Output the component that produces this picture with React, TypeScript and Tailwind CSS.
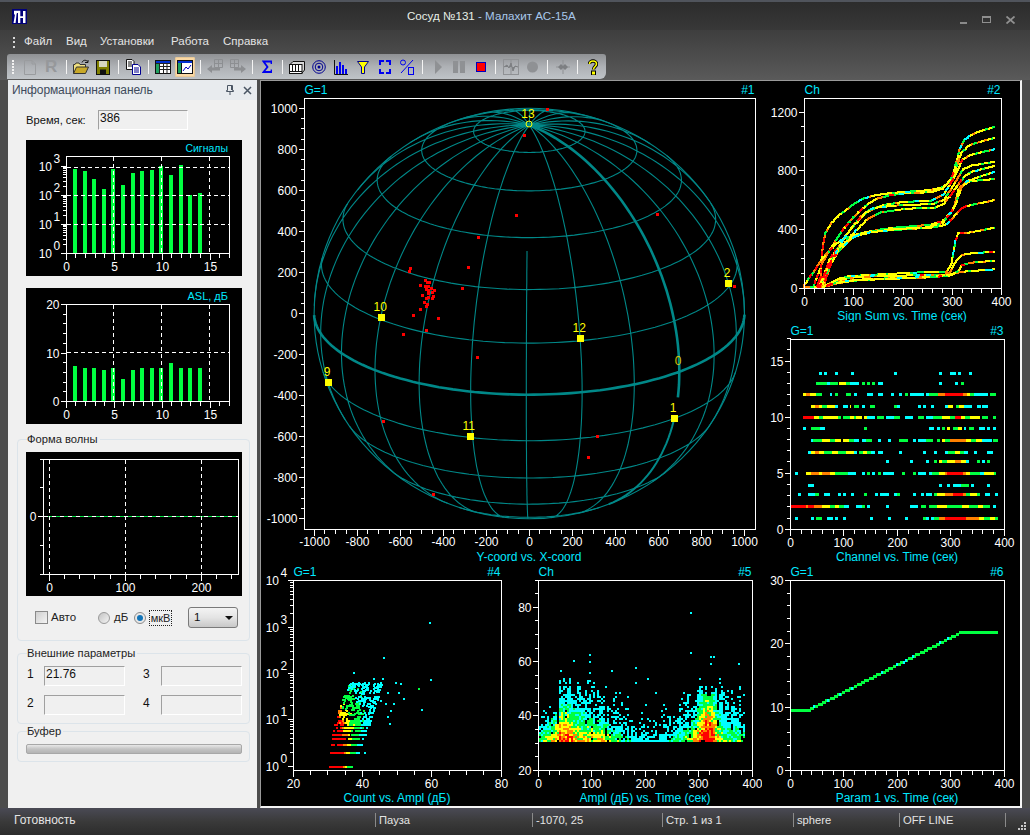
import React from "react";

const C: Record<string, string> = { c: "#00ffff", g: "#00ff40", y: "#ffff00", o: "#ff8000", r: "#ff0000" };

type Tick = { p: number; len: number; text?: string; sup?: string };
type Pt = [number, number, string];

function rng(seed: number) {
  let a = seed;
  return () => {
    a = (a + 0x6d2b79f5) | 0;
    let t = Math.imul(a ^ (a >>> 15), 1 | a);
    t = (t + Math.imul(t ^ (t >>> 7), 61 | t)) ^ t;
    return ((t ^ (t >>> 14)) >>> 0) / 4294967296;
  };
}

// linear axis ticks, position rounded onto the pixel
function lin(v0: number, p0: number, v1: number, p1: number, lo: number, hi: number, major: number, minor: number) {
  const out: Tick[] = [];
  const n = Math.round((hi - lo) / minor);
  for (let i = 0; i <= n; i++) {
    const v = lo + i * minor;
    const p = Math.floor(p0 + ((v - v0) * (p1 - p0)) / (v1 - v0)) + 0.5;
    const isMajor = Math.abs(v % major) < 1e-6;
    out.push({ p, len: isMajor ? 6 : 4, text: isMajor ? String(v) : undefined });
  }
  return out;
}

function logTicks(bottom: number, decade: number, count: number) {
  const out: Tick[] = [];
  for (let d = 0; d <= count; d++) {
    const y = bottom - d * decade;
    out.push({ p: Math.floor(y) + 0.5, len: 6, text: "10", sup: String(d) });
    if (d === count) break;
    for (let m = 2; m < 10; m++) out.push({ p: Math.floor(y - Math.log10(m) * decade) + 0.5, len: 4 });
  }
  return out;
}

function Dots({ pts, w = 2, h = 2 }: { pts: Pt[]; w?: number; h?: number }) {
  const byColor: Record<string, string[]> = {};
  pts.forEach(([x, y, c]) => {
    (byColor[c] ||= []).push(`M${Math.round(x)} ${Math.round(y)}h${w}v${h}h${-w}z`);
  });
  return (
    <g shapeRendering="crispEdges">
      {Object.keys(byColor).map((c) => (
        <path key={c} d={byColor[c].join("")} fill={C[c]} />
      ))}
    </g>
  );
}

type PlotProps = {
  x: number;
  y: number;
  w: number;
  h: number;
  rect: [number, number, number, number];
  xt: Tick[];
  yt: Tick[];
  xBase: number;
  title?: string;
  num?: string;
  titleBase?: number;
  label?: string;
  labelX?: number;
  labelBase?: number;
  children?: React.ReactNode;
};

function Plot({ x, y, w, h, rect, xt, yt, xBase, title, num, titleBase = 0, label, labelX, labelBase, children }: PlotProps) {
  const [l, t, r, b] = rect;
  return (
    <svg width={w} height={h} viewBox={`${x} ${y} ${w} ${h}`} className="block shrink-0 bg-black" fontSize={12}>
      {children}
      <g stroke="#fff" shapeRendering="crispEdges" fill="none">
        <rect x={l} y={t} width={r - l} height={b - t} />
        {xt.map((k, i) => (
          <line key={i} x1={k.p} x2={k.p} y1={b} y2={b + k.len} />
        ))}
        {yt.map((k, i) => (
          <line key={i} y1={k.p} y2={k.p} x1={l} x2={l - k.len} />
        ))}
      </g>
      <g fill="#fff">
        {xt.map((k, i) =>
          k.text ? (
            <text key={i} x={k.p} y={xBase} textAnchor="middle">
              {k.text}
            </text>
          ) : null
        )}
        {yt.map((k, i) =>
          k.text ? (
            k.sup ? (
              <g key={i}>
                <text x={l - 14.5} y={k.p + 4} textAnchor="end">
                  {k.text}
                </text>
                <text x={l - 13} y={k.p - 4}>
                  {k.sup}
                </text>
              </g>
            ) : (
              <text key={i} x={l - 7} y={k.p + 4} textAnchor="end">
                {k.text}
              </text>
            )
          ) : null
        )}
      </g>
      <g fill="#00e8ff">
        {title && (
          <text x={l} y={titleBase}>
            {title}
          </text>
        )}
        {num && (
          <text x={r - 1} y={titleBase} textAnchor="end">
            {num}
          </text>
        )}
        {label && (
          <text x={labelX} y={labelBase} textAnchor="middle">
            {label}
          </text>
        )}
      </g>
    </svg>
  );
}

// --- sphere ------------------------------------------------------------
const SX = 529.3;
const SY = 313.5;
const RX = 215.2;
const RY = 205.2;
const TILT = (23.3 * Math.PI) / 180;
const OFF = -0.8;

function proj(lat: number, lon: number) {
  const la = (lat * Math.PI) / 180;
  const lo = ((lon + OFF) * Math.PI) / 180;
  const xx = Math.cos(la) * Math.sin(lo);
  const zz = Math.sin(la);
  const yy = Math.cos(la) * Math.cos(lo);
  return {
    x: SX + xx * RX,
    y: SY - (zz * Math.cos(TILT) - yy * Math.sin(TILT)) * RY,
    sy: zz * Math.cos(TILT) - yy * Math.sin(TILT),
    d: yy * Math.cos(TILT) + zz * Math.sin(TILT),
  };
}

function trace(n: number, at: (i: number) => ReturnType<typeof proj>, keep: (p: ReturnType<typeof proj>) => boolean) {
  let d = "";
  let pen = false;
  for (let i = 0; i <= n; i++) {
    const p = at(i);
    if (keep(p)) {
      d += `${pen ? "L" : "M"}${p.x.toFixed(1)} ${p.y.toFixed(1)}`;
      pen = true;
    } else pen = false;
  }
  return d;
}

function sphereLines() {
  let thin = "";
  for (const lat of [75, 60, 45, 30, 15, -15, -30, -45, -60, -75]) {
    const all = lat >= 60;
    thin += trace(180, (i) => proj(lat, i * 2), (p) => all || p.d >= 0);
  }
  for (let lon = 0; lon < 360; lon += 15) {
    if (lon === 45) continue;
    if (lon === 0) thin += trace(90, (i) => proj(41 - i * 1.5, 0), (p) => p.d >= 0);
    else thin += trace(90, (i) => proj(90 - i * 2, lon), (p) => p.d >= 0);
  }
  const eq = trace(180, (i) => proj(0, i * 2), (p) => p.d >= 0);
  const mer1 = trace(90, (i) => proj(90 - i * 2, 45), (p) => p.d >= 0 && p.sy > -0.42);
  const mer2 = trace(90, (i) => proj(90 - i * 2, 45), (p) => p.d >= 0 && p.sy < -0.5);
  return { thin, thick: eq + mer1, mid: mer2 };
}

const Z4 = (a: number, b: number): [number, number] => [260 + a / 3, 80 + b / 3];
const RED = [
  [862, 88], [793, 166], [769, 406], [1192, 403], [655, 472], [625, 562], [450, 565], [447, 574], [1423, 619],
  [607, 625], [481, 616], [487, 646], [481, 688], [460, 706], [535, 715], [499, 751], [430, 763], [652, 832],
  [370, 1024], [1012, 1069], [985, 1132], [520, 1243], [496, 601], [500, 607], [508, 607], [495, 619], [503, 619],
  [513, 625], [498, 628], [505, 631], [522, 631], [516, 637], [505, 640], [519, 649], [505, 650], [515, 655],
  [497, 655], [493, 667], [500, 672], [499, 678],
];
const MARKS: [number, number, string, number, number][] = [
  [728.3, 283.3, "2", 727, 276.7],
  [381.3, 317.3, "10", 380.3, 311],
  [580.3, 338.3, "12", 579.3, 331.7],
  [328.3, 382.3, "9", 327, 376],
  [470.3, 436.3, "11", 468.7, 430],
  [674.3, 418.3, "1", 673, 412],
];

function SpherePlot() {
  const s = sphereLines();
  return (
    <Plot
      x={261}
      y={81}
      w={501}
      h={484}
      rect={[304.5, 98.5, 755.5, 529.5]}
      xt={lin(-1000, 314, 1000, 744.3, -1000, 1000, 200, 50)}
      yt={lin(1000, 108.3, -1000, 518.7, -1000, 1000, 200, 50)}
      xBase={546}
      title="G=1"
      num="#1"
      titleBase={93.5}
      label="Y-coord vs. X-coord"
      labelX={529}
      labelBase={560.5}
    >
      <g fill="none" stroke="#008888">
        <g strokeWidth={1.1}>
          <ellipse cx={SX} cy={SY} rx={RX} ry={RY} />
          <path d={s.thin} />
        </g>
        <path d={s.thick} strokeWidth={2.6} />
        <path d={s.mid} strokeWidth={2} />
      </g>
      <g fill="#ff0000" shapeRendering="crispEdges">
        {RED.map(([a, b], i) => {
          const [px, py] = Z4(a, b);
          return <rect key={i} x={Math.round(px) - 1} y={Math.round(py) - 1} width={3} height={3} />;
        })}
      </g>
      <g fill="#ffff00" textAnchor="middle">
        {MARKS.map(([mx, my, t, lx, ly]) => (
          <g key={t}>
            <rect x={Math.round(mx) - 3} y={Math.round(my) - 3} width={7} height={7} shapeRendering="crispEdges" />
            <text x={lx} y={ly}>
              {t}
            </text>
          </g>
        ))}
        <text x={528} y={117.7}>
          13
        </text>
        <text x={678} y={364.7} fill="#d8c800">
          0
        </text>
        <circle cx={529} cy={124} r={3} fill="none" stroke="#ffff00" />
      </g>
    </Plot>
  );
}

// --- #2 sign sum --------------------------------------------------------
const CURVES: number[][] = [
  [133, 860, 180, 860, 190, 710, 220, 660, 270, 620, 320, 590, 400, 578, 540, 568, 575, 540, 605, 425, 640, 400, 705, 380],
  [160, 860, 190, 780, 240, 700, 290, 640, 340, 600, 400, 582, 540, 575, 580, 530, 610, 440, 705, 413],
  [175, 860, 210, 790, 260, 700, 320, 630, 400, 608, 540, 600, 590, 520, 610, 470, 705, 447],
  [175, 860, 215, 780, 260, 700, 330, 625, 420, 615, 545, 612, 590, 540, 615, 500, 705, 485],
  [185, 860, 220, 770, 270, 710, 340, 640, 450, 625, 545, 622, 590, 560, 620, 520, 705, 497],
  [133, 855, 175, 795, 190, 770, 240, 720, 300, 700, 380, 685, 540, 672, 580, 630, 600, 550, 705, 515],
  [180, 860, 215, 760, 280, 710, 360, 690, 540, 680, 585, 620, 610, 545, 705, 537],
  [190, 860, 220, 770, 290, 700, 400, 690, 555, 680, 590, 640, 610, 620, 705, 600],
  [190, 860, 250, 830, 320, 825, 520, 815, 570, 815, 590, 700, 615, 700, 705, 683],
  [190, 860, 240, 838, 300, 830, 500, 825, 565, 825, 590, 780, 610, 762, 705, 755],
  [190, 860, 240, 845, 300, 838, 540, 830, 590, 820, 610, 790, 705, 782],
  [185, 862, 240, 848, 300, 840, 560, 830, 600, 815, 705, 808],
];

// one pass of corner cutting so the curves do not bend hard at the control points
function smooth(p: number[]) {
  const q = [p[0], p[1]];
  for (let i = 0; i + 3 < p.length; i += 2) {
    q.push(p[i] * 0.8 + p[i + 2] * 0.2, p[i + 1] * 0.8 + p[i + 3] * 0.2);
    q.push(p[i] * 0.2 + p[i + 2] * 0.8, p[i + 1] * 0.2 + p[i + 3] * 0.8);
  }
  q.push(p[p.length - 2], p[p.length - 1]);
  return q;
}

function sumPoints() {
  const r = rng(7);
  const pts: Pt[] = [];
  CURVES.forEach((raw) => {
    const c = smooth(raw);
    let step = 0;
    let col = "y";
    for (let i = 0; i + 3 < c.length; i += 2) {
      const x0 = 760 + c[i] / 3;
      const y0 = c[i + 1] / 3;
      const x1 = 760 + c[i + 2] / 3;
      const y1 = c[i + 3] / 3;
      const n = Math.max(1, Math.ceil(Math.hypot(x1 - x0, y1 - y0) / 1.2));
      for (let k = 0; k < n; k++) {
        const px = x0 + ((x1 - x0) * k) / n;
        const py = y0 + ((y1 - y0) * k) / n;
        if (step++ % 3 === 0) {
          const v = r();
          const hot = (px < 835 && py > 225) || (px > 950 && px < 965 && py > 160 && py < 240);
          if (hot) col = v < 0.35 ? "o" : v < 0.6 ? "r" : v < 0.9 ? "y" : "g";
          else col = v < 0.55 ? "y" : v < 0.78 ? "g" : v < 0.92 ? "o" : v < 0.98 ? "c" : "r";
        }
        pts.push([px - 1, py - 1, col]);
      }
    }
  });
  return pts;
}

// --- #3 channel ---------------------------------------------------------
const ROWS: [number, string][] = [
  [160, "177-186c 192-201c 225-234c 273-282c 402-411c 537-546c 570-588c 594-603c 627-636c"],
  [190, "168-200g 201-210c 210-235g 238-258y 258-270g 270-297c 306-315g 321-330g 336-345g 354-369c 537-546c 585-594c 603-612g"],
  [223, "129-138y 138-150o 150-168y 168-186g 210-216c 225-234g 258-273g 282-291c 321-339c 354-369c 393-402c 417-426c 435-444g 450-465c 465-492c 498-507c 507-534g 534-555o 555-609r 609-621o 621-630y 630-642g 642-684c 690-708g"],
  [258, "153-165y 165-177o 177-186y 186-201g 201-225y 225-234c 249-264c 270-273y 282-297g 306-315c 330-345g 402-411g 411-420c 474-483c 489-498c 513-522c 555-564c 564-579y 588-597g 597-612y 612-636c 651-663c 666-684c"],
  [290, "129-162r 162-177y 177-189g 189-234y 234-243g 249-270g 270-282y 282-288g 288-306y 312-321y 321-345c 351-372g 378-402c 402-420g 435-459c 474-492g 498-519c 519-546g 546-570y 570-585g 585-603r 603-615y 615-630g 630-660y 666-684g 699-708g"],
  [325, "129-138c 153-180g 180-195c 312-321g 507-522c 531-540c 546-555g 561-570y 579-594g 594-606y 612-618c 627-642g 657-675c 681-690c 699-708c"],
  [360, "153-159c 159-186g 186-210y 210-225g 225-243y 249-267y 267-282g 282-297c 306-318c 318-336g 354-363c 384-393c 417-444g 459-468c 474-498c 498-519g 531-540g 546-555y 555-570g 570-618o 618-633y 633-648g 648-666y 666-696c 699-714g"],
  [397, "144-153c 153-165y 165-177o 177-192y 192-216g 216-234y 234-258g 258-282y 282-291c 297-309g 309-321y 321-333g 333-345c 354-369c 417-426c 489-498c 522-531c 555-564c 564-585g 585-600y 600-612g 612-624c 642-651c 681-699c"],
  [424, "378-387c 450-459c 498-507c 522-531g 537-546y 546-561g 561-585y 585-603o 603-618y 618-627c 651-660g 666-675c 681-690g"],
  [460, "105-114c 138-153y 153-177o 177-186y 186-210o 210-225y 225-264g 264-288c 306-315c 321-330g 336-345c 354-363g 369-402c 426-435g 459-468g 474-498c 507-516c 516-537g 537-555y 555-561o 561-609r 609-618o 618-630y 630-660g 660-672c 672-702y 702-708g"],
  [496, "144-162c 537-546c 561-570c 579-603c 603-627g 633-642c 681-690c"],
  [523, "114-123c 144-165c 165-177g 192-210c 234-243c 249-258c 273-282c 312-321g 345-354c 360-387c 402-411c 411-420g 459-468c 483-492c 498-516c 522-531g 531-555y 555-579o 579-609r 609-618o 618-630g 630-651y 651-660g 675-690c 705-714c"],
  [559, "91-138r 138-144o 144-162r 162-186o 186-210y 210-225g 225-237y 237-252g 252-267c 288-306c 306-315g 321-330c 378-387c 450-474c 483-498g 507-531g 531-561y 561-606g 606-627y 627-654g 654-669y 669-690g 699-708c"],
  [595, "105-114c 153-162c 168-186g 201-219c 225-234c 249-258c 330-339c 384-393c 435-444c 489-498g 498-507c 513-522c 522-537g 537-555o 555-618r 618-657o 657-672y 672-690g 690-705y 705-714g"],
];

function ChannelRows() {
  return (
    <g shapeRendering="crispEdges">
      {ROWS.map(([zy, spec]) =>
        spec.split(" ").map((seg) => {
          const [a, b] = seg.slice(0, -1).split("-").map(Number);
          const c = seg[seg.length - 1];
          const x = Math.round(760 + a / 3);
          return <rect key={zy + seg} x={x} y={Math.round(320 + zy / 3) - 1} width={Math.round((b - a) / 3)} height={3} fill={C[c]} />;
        })
      )}
    </g>
  );
}

// --- #4 count vs ampl ---------------------------------------------------
function countPoints() {
  const r = rng(11);
  const pts: Pt[] = [];
  for (let c = 1; c <= 65; c++) {
    const lg = Math.log10(c);
    const L = 30.4 + 1.8 * lg * lg;
    const U = 37.3 + lg * 5;
    for (let a = L; a < U; a += 0.58) {
      const t = (a - L) / (U - L);
      let prob = c <= 6 ? 0.96 : c <= 10 ? 0.8 : 0.5 * (1 - t * 0.35) * (lg > 1.55 ? 0.5 : 1);
      if (c > 10 && c % 2 === 0 && lg > 1.2) prob *= 0.7;
      if (r() > prob) continue;
      const heat = (1 - t * 0.9) * (1.15 - 0.55 * lg) + (r() - 0.5) * 0.12;
      const col = heat > 0.56 ? "r" : heat > 0.48 ? "o" : heat > 0.38 ? "y" : heat > 0.2 ? "g" : "c";
      pts.push([293.3 + (a - 20) * 3.467, 766 - 46.3 * lg, col]);
    }
  }
  const extra = [
    [507, 185], [510, 356], [483, 447], [369, 291], [278, 336], [415, 395], [428, 415], [405, 365], [420, 370],
    [390, 450], [340, 353], [365, 353], [356, 378], [380, 395], [388, 488], [380, 468], [312, 576], [290, 576],
    [350, 380], [375, 430], [360, 420], [400, 428],
  ];
  extra.forEach(([a, b]) => pts.push([260 + a / 3, 560 + b / 3, "c"]));
  pts.push([260 + 473 / 3, 560 + 383 / 3, "g"]);
  return pts;
}

// --- #5 ampl vs time ----------------------------------------------------
function amplPoints() {
  const r = rng(23);
  const pts: Pt[] = [];
  const G = (t: number, m: number, s: number) => Math.exp(-Math.pow((t - m) / s, 2) / 2);
  for (let t = 1; t < 385; t += 3.74) {
    const A = 0.3 + 0.6 * G(t, 10, 14) + 1.9 * G(t, 45, 14) + 1.0 * G(t, 85, 30) + 0.5 * G(t, 130, 30) + 2.5 * G(t, 315, 12) + 0.9 * G(t, 295, 30) + 0.55 * G(t, 370, 25);
    const S = 5 + 4.5 * G(t, 70, 45) + 5 * G(t, 315, 30) + 2.5 * G(t, 370, 25);
    const top = (t < 35 ? 40 : t < 110 ? 52 : t < 170 ? 49 : t < 265 ? 42 : 50) + (r() - 0.5) * 6;
    const colF = 0.35 + r() * 1.0;
    for (let a = 31; a < 56; a += 0.74) {
      const d = A * Math.exp(-(a - 31) / S) * (0.6 + r() * 0.8);
      let p = a === 31 ? 0.97 : Math.min(1, d * 2.2 * colF);
      if (a > top) p *= 0.04;
      if (r() > p) continue;
      const col = d > 2.2 ? "r" : d > 1.55 ? "o" : d > 1.05 ? "y" : d > 0.62 ? "g" : "c";
      pts.push([538.3 + t * 0.535, 770.3 - (a - 20) * 2.71, col]);
    }
  }
  const extra = [
    [1290, 155], [1290, 276], [987, 282], [987, 302], [940, 300], [900, 330], [1052, 330], [1125, 321], [1434, 310],
    [1350, 288], [1360, 288], [1350, 310], [987, 335], [1160, 354], [1125, 366],
  ];
  extra.forEach(([a, b]) => pts.push([260 + a / 3, 560 + b / 3, "c"]));
  return pts;
}

// --- #6 param -----------------------------------------------------------
function paramPoints() {
  const pts: Pt[] = [];
  const r = rng(5);
  const seg = (x0: number, y0: number, x1: number, y1: number) => {
    for (let x = x0; x < x1; x += 1.5) {
      const y = y0 + ((y1 - y0) * (x - x0)) / (x1 - x0);
      const sl = y0 !== y1 && r() < 0.1;
      pts.push([x, Math.round(y / 2) * 2 - 1, sl ? "c" : "g"]);
    }
  };
  seg(790.5, 710, 807, 710);
  seg(807, 710, 960, 632);
  seg(960, 632, 997, 632);
  return pts;
}

// --- small side charts --------------------------------------------------
const BAR_X = [75, 85, 94, 104, 113, 123, 133, 142, 152, 161, 171, 181, 190, 200];
const TOP_A = [267, 273, 297, 327, 267, 315, 279, 273, 270, 258, 285, 255, 345, 339];
const TOP_B = [858, 864, 864, 870, 864, 897, 870, 864, 864, 864, 849, 864, 864, 864];
const X_SIDE = lin(0, 66.3, 17, 229.3, 0, 17, 5, 1).map((k) => ({ ...k, len: k.text ? 6 : 4 }));

function Bars({ tops, bottom, base }: { tops: number[]; bottom: number; base: number }) {
  return (
    <g fill="#00ff40" shapeRendering="crispEdges">
      {tops.map((t, i) => {
        const y = Math.round(base + t / 3);
        return <rect key={i} x={BAR_X[i] - 2} y={y} width={4} height={bottom - y} />;
      })}
    </g>
  );
}

function Dash({ x1, y1, x2, y2 }: { x1: number; y1: number; x2: number; y2: number }) {
  return <line x1={x1} y1={y1} x2={x2} y2={y2} stroke="#fff" strokeDasharray="4 3" shapeRendering="crispEdges" />;
}

function SignalsChart() {
  return (
    <Plot x={26} y={140} w={216} h={136} rect={[66.5, 156.5, 229.5, 253.5]} xt={X_SIDE} yt={logTicks(253, 29, 3)} xBase={270.5}>
      <Bars tops={TOP_A} bottom={253} base={80} />
      {[113.5, 161.5, 209.5].map((x) => <Dash key={x} x1={x} y1={157} x2={x} y2={253} />)}
      {[167.5, 195.5, 224.5].map((y) => <Dash key={y} x1={67} y1={y} x2={229} y2={y} />)}
      <text x={228} y={152} fill="#00e8ff" fontSize={10.5} textAnchor="end">
        Сигналы
      </text>
    </Plot>
  );
}

function AslChart() {
  return (
    <Plot x={26} y={288} w={216} h={136} rect={[66.5, 304.5, 229.5, 401.5]} xt={X_SIDE} yt={lin(0, 401.5, 20, 304.5, 0, 20, 10, 2)} xBase={418.5}>
      <Bars tops={TOP_B} bottom={401} base={80} />
      {[113.5, 161.5, 209.5].map((x) => <Dash key={x} x1={x} y1={305} x2={x} y2={401} />)}
      <Dash x1={67} y1={352.5} x2={229} y2={352.5} />
      <text x={228} y={300} fill="#00e8ff" fontSize={11} textAnchor="end">
        ASL, дБ
      </text>
    </Plot>
  );
}

function WaveChart() {
  const yTicks: Tick[] = [
    { p: 459.5, len: 4 },
    { p: 487.5, len: 4 },
    { p: 516.5, len: 6, text: "0" },
    { p: 545.5, len: 4 },
    { p: 574.5, len: 4 },
  ];
  return (
    <Plot x={26} y={452} w={216} h={144} rect={[43.5, 459.5, 238.5, 574.5]} xt={lin(0, 49.3, 100, 125.3, 0, 240, 100, 20)} yt={yTicks} xBase={591.5}>
      <line x1={44} x2={238} y1={516.5} y2={516.5} stroke="#00e040" shapeRendering="crispEdges" />
      <line x1={44} x2={238} y1={516.5} y2={516.5} stroke="#fff" strokeDasharray="4 4" shapeRendering="crispEdges" />
      {[49.5, 125.5, 201.5].map((x) => <Dash key={x} x1={x} y1={460} x2={x} y2={574} />)}
    </Plot>
  );
}

// --- toolbar icons ------------------------------------------------------
function Ico({ w, ml, children }: { w: number; ml: string; children: React.ReactNode }) {
  return (
    <svg width={w} height={16} viewBox={`0 0 ${w} 16`} className={`block shrink-0 ${ml}`}>
      {children}
    </svg>
  );
}

function Sep({ ml }: { ml: string }) {
  return <div className={`h-[14px] w-px shrink-0 bg-[#f4f4f4] ${ml}`} />;
}

function Toolbar() {
  return (
    <div className="flex h-[25px] w-[599px] items-center rounded-t-[3px] rounded-br-[6px] bg-gradient-to-b from-[#8f9194] via-[#aeb1b5] to-[#bfc3c7]">
      <div className="ml-[5px] flex h-[14px] w-[2px] flex-col justify-between">
        {[0, 1, 2, 3, 4].map((i) => (
          <div key={i} className="h-[2px] w-[2px] bg-[#f2f2f2]" />
        ))}
      </div>
      <Ico w={12} ml="ml-[10px]">
        <path d="M.5 1.5H8L11.5 5V15.5H.5Z M8 1.5V5H11.5" fill="none" stroke="#9a9c9f" />
      </Ico>
      <span className="ml-[9px] w-[12px] shrink-0 text-[17px] font-bold leading-[16px] text-[#96989b]">R</span>
      <Sep ml="ml-[9px]" />
      <Ico w={16} ml="ml-[6px]">
        <path d="M.5 14.5V5.5H2L3 4H6L7 5.5H12.5V8" fill="#f0e080" stroke="#333" />
        <path d="M.5 14.5L3.5 8H15.5L12.5 14.5Z" fill="#c8a828" stroke="#333" />
        <path d="M9 3.5C10 1 12.5 .5 14.5 2.5M12 3.5H15V1" fill="none" stroke="#111" />
      </Ico>
      <Ico w={14} ml="ml-[7px]">
        <rect x=".5" y="1.5" width="13" height="14" fill="#808000" stroke="#111" />
        <rect x="3" y="2" width="8" height="6" fill="#d8d8c0" />
        <rect x="4" y="10.5" width="6" height="5" fill="#111" />
      </Ico>
      <Sep ml="ml-[8px]" />
      <Ico w={15} ml="ml-[7px]">
        <path d="M.5 .5H6L8 2.5V10.5H.5Z" fill="#fff" stroke="#111" />
        <path d="M2 3H6M2 5H6M2 7H6" stroke="#111" />
        <path d="M6.5 5.5H12L14.5 8V15.5H6.5Z" fill="#fff" stroke="#000090" />
        <path d="M8 9H13M8 11H13M8 13H13" stroke="#000090" />
      </Ico>
      <Sep ml="ml-[7px]" />
      <Ico w={16} ml="ml-[6px]">
        <rect x=".5" y="1.5" width="15" height="13" fill="#fff" stroke="#111" />
        <rect x="1" y="2" width="14" height="2" fill="#0030d0" />
        <path d="M1 4.5H15 M1 7.5H15 M1 10.5H15 M4.5 4V14 M8.5 4V14 M12 4V14" stroke="#222" />
        <rect x="1" y="5" width="3" height="9" fill="#20a060" />
      </Ico>
      <div className="ml-[4px] flex h-[20px] w-[20px] shrink-0 items-center justify-center rounded-[2px] bg-[#fbd9a5] shadow-[0_0_0_1px_#e8c896_inset]">
        <svg width={16} height={16} viewBox="0 0 16 16">
          <rect x=".5" y="1.5" width="15" height="13" fill="#fff" stroke="#111" />
          <rect x="1" y="2" width="14" height="2" fill="#0030d0" />
          <rect x="1" y="4" width="3" height="10" fill="#20a060" />
          <path d="M4.5 4V14" stroke="#111" />
          <path d="M6 12L9 8L11 10L14 6" fill="none" stroke="#0000c0" />
        </svg>
      </div>
      <Sep ml="ml-[5px]" />
      <Ico w={39} ml="ml-[6px]">
        <path d="M0 10L5 6V8.5H13V11.5H5V14Z" fill="#8d8f92" />
        <path d="M39 10L34 6V8.5H27V11.5H34V14Z" fill="#8d8f92" />
        <path d="M7.5 .5H15.5V8.5H7.5Z M11.5 .5V8.5 M7.5 4.5H15.5 M23.5 .5H31.5V8.5H23.5Z M27.5 .5V8.5 M23.5 4.5H31.5" fill="none" stroke="#8d8f92" />
      </Ico>
      <Sep ml="ml-[6px]" />
      <Ico w={10} ml="ml-[9px]">
        <path d="M9.5 5V2.5H1.5L5.5 8L1.5 13H9.5V10.5" fill="none" stroke="#0000f0" strokeWidth={1.8} />
      </Ico>
      <Sep ml="ml-[10px]" />
      <Ico w={16} ml="ml-[6px]">
        <path d="M1 5.5L4 2.5H15.5V11L13 14" fill="#d8d8d8" stroke="#111" />
        <rect x=".5" y="5.5" width="12.5" height="9" fill="#fff" stroke="#111" />
        <path d="M3.5 6V12 M6.5 6V12 M9.5 6V12 M1 12.5H13" stroke="#111" />
      </Ico>
      <Ico w={14} ml="ml-[7px]">
        <circle cx="7" cy="8" r="6.3" fill="none" stroke="#000090" />
        <circle cx="7" cy="8" r="3.8" fill="none" stroke="#000090" />
        <circle cx="7" cy="8" r="1.5" fill="#000090" />
      </Ico>
      <Ico w={14} ml="ml-[8px]">
        <path d="M.5 1V15.5H14" fill="none" stroke="#111" />
        <path d="M2 7h2v8H2z M5 3h2v12H5z M8 6h2v9H8z M11 10h2v5h-2z" fill="#0000f0" />
      </Ico>
      <Ico w={12} ml="ml-[9px]">
        <path d="M.5 2.5H11.5L7.5 8V14.5H4.5V8Z" fill="#ffff00" stroke="#000090" />
      </Ico>
      <Ico w={12} ml="ml-[10px]">
        <path d="M1 6V2H5 M7 2H11V6 M11 10V14H7 M5 14H1V10" fill="none" stroke="#0000f0" strokeWidth={2} />
      </Ico>
      <Ico w={14} ml="ml-[9px]">
        <circle cx="3" cy="3.5" r="2.5" fill="none" stroke="#0000f0" />
        <path d="M1 14L13 1" stroke="#0000f0" />
        <rect x="8.5" y="8.5" width="5" height="7" fill="none" stroke="#0000f0" />
      </Ico>
      <Sep ml="ml-[8px]" />
      <Ico w={7} ml="ml-[12px]">
        <path d="M0 1L7 8L0 15Z" fill="#8f9194" />
      </Ico>
      <Ico w={12} ml="ml-[11px]">
        <path d="M0 2h5v12H0z M7 2h5v12H7z" fill="#8f9194" />
      </Ico>
      <Ico w={10} ml="ml-[11px]">
        <rect x=".5" y="3.5" width="9" height="9" fill="#ff0000" stroke="#0000c0" />
      </Ico>
      <Sep ml="ml-[9px]" />
      <Ico w={16} ml="ml-[7px]">
        <rect x=".5" y=".5" width="15" height="15" fill="none" stroke="#8f9194" />
        <path d="M8 .5V15.5" stroke="#8f9194" />
        <path d="M1 8L4 6L6 9L8 4L10 12L12 7L15 8" fill="#7d7f82" stroke="#7d7f82" />
      </Ico>
      <Ico w={11} ml="ml-[8px]">
        <circle cx="5.5" cy="8" r="5.5" fill="#8f9194" />
      </Ico>
      <Sep ml="ml-[9px]" />
      <Ico w={14} ml="ml-[8px]">
        <path d="M7 1V15 M0 8H14" stroke="#8f9194" />
        <path d="M2 8L5 5L7 7L9 5L12 8L9 11L7 9L5 11Z" fill="#7d7f82" />
      </Ico>
      <Sep ml="ml-[7px]" />
      <Ico w={10} ml="ml-[10px]">
        <path d="M1.5 5C1.5 1 8.5 1 8.5 5C8.5 7.5 5.5 7.5 5.5 10.5" fill="none" stroke="#000" strokeWidth={3.4} />
        <path d="M1.5 5C1.5 1 8.5 1 8.5 5C8.5 7.5 5.5 7.5 5.5 10.5" fill="none" stroke="#ffff00" strokeWidth={1.6} />
        <rect x="3.5" y="12" width="4" height="4" fill="#ffff00" stroke="#000" />
      </Ico>
    </div>
  );
}

// --- side panel bits ----------------------------------------------------
function Sunken({ className, children }: { className: string; children?: React.ReactNode }) {
  return (
    <div className={`border-t border-l border-t-[#a0a0a0] border-l-[#a0a0a0] border-b border-r border-b-white border-r-white bg-[#f0f0f0] pl-[1px] leading-[15px] text-[#111] ${className}`}>
      {children}
    </div>
  );
}

function Group({ title, className, children }: { title: string; className: string; children: React.ReactNode }) {
  return (
    <fieldset className={`w-[233px] rounded-[4px] border border-[#dce4ea] pl-[8px] pr-[7px] ${className}`}>
      <legend className="ml-[1px] h-[14px] pr-[2px] text-[11.2px] leading-[14px] text-[#222]">{title}</legend>
      {children}
    </fieldset>
  );
}

function SidePanel() {
  return (
    <div className="ml-[8px] flex w-[249px] shrink-0 flex-col bg-[#f0f0f0] text-[11.5px]">
      <div className="flex h-[20px] items-center justify-between bg-[#e8ebee] pl-[4px] pr-[5px]">
        <span className="text-[12px] tracking-[-0.1px] text-[#3d4a5c]">Информационная панель</span>
        <div className="flex items-center gap-[9px]">
          <svg width={8} height={10} viewBox="0 0 8 10">
            <path d="M1.5 .5H6.5V5.5H7.5V6.5H.5V5.5H1.5Z M4 7V10 M5.5 1V5" fill="none" stroke="#4a5563" />
          </svg>
          <svg width={9} height={9} viewBox="0 0 9 9">
            <path d="M1 1L8 8M8 1L1 8" stroke="#4a5563" strokeWidth={1.5} />
          </svg>
        </div>
      </div>
      <div className="flex flex-col pl-[9px]">
        <div className="mt-[10px] flex h-[20px] items-center pl-[9px]">
          <span className="w-[72px] text-[11.2px] text-[#111]">Время, сек:</span>
          <Sunken className="h-[20px] w-[90px] text-[12px]">386</Sunken>
        </div>
        <div className="ml-[9px] mt-[10px]">
          <SignalsChart />
        </div>
        <div className="ml-[9px] mt-[12px]">
          <AslChart />
        </div>
        <Group title="Форма волны" className="mt-[8px] h-[209px]">
          <div className="mt-[6px]">
            <WaveChart />
          </div>
          <div className="mt-[11px] flex h-[21px] items-center">
            <div className="ml-[9px] h-[13px] w-[13px] shrink-0 border border-[#8a8a8a] bg-gradient-to-br from-[#cfcfcf] to-[#f4f4f4]" />
            <span className="ml-[3px] w-[26px] text-[#222]">Авто</span>
            <div className="ml-[21px] h-[12px] w-[12px] shrink-0 rounded-full border border-[#9a9a9a] bg-gradient-to-br from-[#c4c4c4] to-[#f4f4f4]" />
            <span className="ml-[4px] w-[13px] text-[#222]">дБ</span>
            <div className="ml-[7px] flex h-[12px] w-[12px] shrink-0 items-center justify-center rounded-full border border-[#8a8a8a] bg-[#e8e8e8]">
              <div className="h-[6px] w-[6px] rounded-full bg-[#1274b8]" />
            </div>
            <span className="ml-[3px] w-[23px] shrink-0 border border-dotted border-[#222] text-center leading-[14px] text-[11px] text-[#222]">мкВ</span>
            <div className="ml-[16px] flex h-[21px] w-[50px] shrink-0 items-center justify-between rounded-[3px] border border-[#7a7a7a] bg-gradient-to-b from-[#f4f4f4] via-[#e4e4e4] to-[#c8c8c8] pl-[5px] pr-[4px] text-[#111]">
              <span>1</span>
              <svg width={8} height={4} viewBox="0 0 8 4">
                <path d="M0 0H8L4 4Z" fill="#111" />
              </svg>
            </div>
          </div>
        </Group>
        <Group title="Внешние параметры" className="mt-[5px] h-[78px]">
          <div className="mt-[6px] grid grid-cols-[18px_81px_36px_81px] grid-rows-[20px_20px] gap-y-[9px] items-center text-[12px] leading-[15px] text-[#111]">
            <span className="mb-[3px] pl-[1px]">1</span>
            <Sunken className="h-[20px]">21.76</Sunken>
            <span className="mb-[3px] pl-[18px]">3</span>
            <Sunken className="h-[20px]" />
            <span className="mb-[3px] pl-[1px]">2</span>
            <Sunken className="h-[20px]" />
            <span className="mb-[3px] pl-[18px]">4</span>
            <Sunken className="h-[20px]" />
          </div>
        </Group>
        <Group title="Буфер" className="h-[38px]">
          <div className="mt-[6px] h-[10px] rounded-[2px] border border-[#a8a8a8] bg-gradient-to-b from-[#e8e8e8] via-[#c4c4c4] to-[#b4b4b4]" />
        </Group>
      </div>
    </div>
  );
}

function StatusCell({ w, children }: { w: string; children?: React.ReactNode }) {
  return (
    <div className={`flex h-[22px] shrink-0 items-center pl-[4px] text-[11.2px] ${w}`}>
      <div className="mr-[3px] h-[14px] w-px bg-[#8a8a8a]" />
      {children}
    </div>
  );
}

function Main() {
  const frame2: [number, number, number, number] = [804.5, 98.5, 1001.5, 288.5];
  const frame3: [number, number, number, number] = [790.5, 339.5, 1004.5, 529.5];
  const frame4: [number, number, number, number] = [293.5, 580.5, 501.5, 770.5];
  const frame5: [number, number, number, number] = [538.5, 580.5, 752.5, 770.5];
  const frame6: [number, number, number, number] = [790.5, 580.5, 1004.5, 770.5];
  const xTime = lin(0, 790.3, 400, 1004.3, 0, 400, 100, 20);
  return (
    <div className="ml-[3px] flex h-[728px] w-[762px] shrink-0 border-t border-l border-t-[#9a9a9a] border-l-[#9a9a9a] border-r-2 border-b-2 border-r-[#f4f4f4] border-b-[#f4f4f4]">
      <div className="flex w-[501px] flex-col">
        <SpherePlot />
        <div className="flex">
          <Plot x={261} y={565} w={251} h={241} rect={frame4} xt={lin(20, 293.3, 80, 501.3, 20, 80, 20, 5)} yt={logTicks(766, 46.3, 4)} xBase={787.5} title="G=1" num="#4" titleBase={576} label="Count vs. Ampl (дБ)" labelX={397} labelBase={802}>
            <Dots pts={countPoints()} />
          </Plot>
          <Plot x={512} y={565} w={250} h={241} rect={frame5} xt={lin(0, 538.3, 400, 752.3, 0, 400, 100, 20)} yt={lin(20, 770.3, 80, 607.3, 20, 90, 20, 5)} xBase={787.5} title="Ch" num="#5" titleBase={576} label="Ampl (дБ) vs. Time (сек)" labelX={645} labelBase={802}>
            <Dots pts={amplPoints()} />
          </Plot>
        </div>
      </div>
      <div className="flex w-[258px] flex-col">
        <Plot x={762} y={81} w={258} h={241} rect={frame2} xt={lin(0, 804.5, 400, 1001.5, 0, 400, 100, 20)} yt={lin(0, 288.3, 1200, 112.3, 0, 1200, 400, 100)} xBase={305.5} title="Ch" num="#2" titleBase={93.5} label="Sign Sum vs. Time (сек)" labelX={902} labelBase={319.5}>
          <Dots pts={sumPoints()} />
        </Plot>
        <Plot x={762} y={322} w={258} h={243} rect={frame3} xt={xTime} yt={lin(0, 529.3, 15, 361, 0, 17, 5, 1)} xBase={546.5} title="G=1" num="#3" titleBase={334.5} label="Channel vs. Time (сек)" labelX={897} labelBase={560.5}>
          <ChannelRows />
        </Plot>
        <Plot x={762} y={565} w={258} h={241} rect={frame6} xt={xTime} yt={lin(0, 770.3, 30, 580.7, 0, 30, 10, 2)} xBase={787.5} title="G=1" num="#6" titleBase={576} label="Param 1 vs. Time (сек)" labelX={897} labelBase={802}>
          <Dots pts={paramPoints()} h={3} />
        </Plot>
      </div>
    </div>
  );
}

export default function App() {
  return (
    <div className="flex h-[835px] w-[1030px] flex-col overflow-hidden bg-[#4c4c4c] font-['Liberation_Sans',sans-serif] text-[12px]">
      <div className="relative flex h-[30px] shrink-0 items-center border-t-2 border-t-[#50545c] bg-gradient-to-b from-[#2c2c2c] to-[#383838]">
        <svg width={15} height={15} viewBox="0 0 15 15" className="ml-[12px] block">
          <rect width={15} height={15} fill="#00007a" />
          <path d="M2 1.7H8.3V14H6V4H5L4.6 5L3.6 14H1.5L3 5.5H2Z M8.3 7.3H11V2H13.5V14H11V9H8.3Z" fill="#fff" />
        </svg>
        <div className="ml-[380px] text-[11.6px] text-[#e8efe8]">
          Сосуд №131 <span className="text-[#a8c8ec]">- Малахит АС-15А</span>
        </div>
        <div className="absolute right-[15px] top-[13px] flex items-center gap-[15px]">
          <div className="mt-[7px] h-[2px] w-[7px] bg-[#8a8a8a]" />
          <div className="h-[7px] w-[9px] border border-t-2 border-[#8f8f8f]" />
          <svg width={9} height={8} viewBox="0 0 9 8">
            <path d="M.5 .5L8.5 7.5M8.5 .5L.5 7.5" stroke="#909090" strokeWidth={1.8} />
          </svg>
        </div>
      </div>
      <div className="h-[50px] shrink-0 bg-gradient-to-b from-[#3e3e3e] to-[#5a5a5a] pl-[7px]">
        <div className="flex h-[24px] items-center">
          <div className="ml-[6px] flex h-[11px] w-[2px] flex-col justify-between">
            <div className="h-[2px] bg-[#d8d8d8]" />
            <div className="h-[2px] bg-[#d8d8d8]" />
            <div className="h-[2px] bg-[#d8d8d8]" />
          </div>
          <div className="ml-[9px] flex text-[11.5px] text-[#e4e4e4]">
            <span className="w-[42px]">Файл</span>
            <span className="w-[34px]">Вид</span>
            <span className="w-[71px]">Установки</span>
            <span className="w-[52px]">Работа</span>
            <span>Справка</span>
          </div>
        </div>
        <Toolbar />
      </div>
      <div className="flex h-[728px] shrink-0">
        <SidePanel />
        <Main />
      </div>
      <div className="relative flex h-[27px] shrink-0 items-start bg-gradient-to-b from-[#4a4a55] via-[#3a3a3a] to-[#2c2c2c] pt-[1px] text-[#e4e4e4]">
        <div className="flex h-[22px] w-[371px] shrink-0 items-center pl-[14px]">Готовность</div>
        <StatusCell w="w-[157px]">Пауза</StatusCell>
        <StatusCell w="w-[130px]">-1070, 25</StatusCell>
        <StatusCell w="w-[131px]">Стр. 1 из 1</StatusCell>
        <StatusCell w="w-[106px]">sphere</StatusCell>
        <StatusCell w="w-[106px]">OFF LINE</StatusCell>
        <StatusCell w="w-[20px]" />
        <div className="absolute right-[4px] bottom-[5px] grid grid-cols-3 gap-[1px]">
          {[0, 1, 2, 3, 4, 5, 6, 7, 8].map((i) => (
            <div key={i} className={`h-[2px] w-[2px] ${i === 0 || i === 1 || i === 3 ? "bg-transparent" : "bg-[#c8c8c8]"}`} />
          ))}
        </div>
      </div>
    </div>
  );
}
